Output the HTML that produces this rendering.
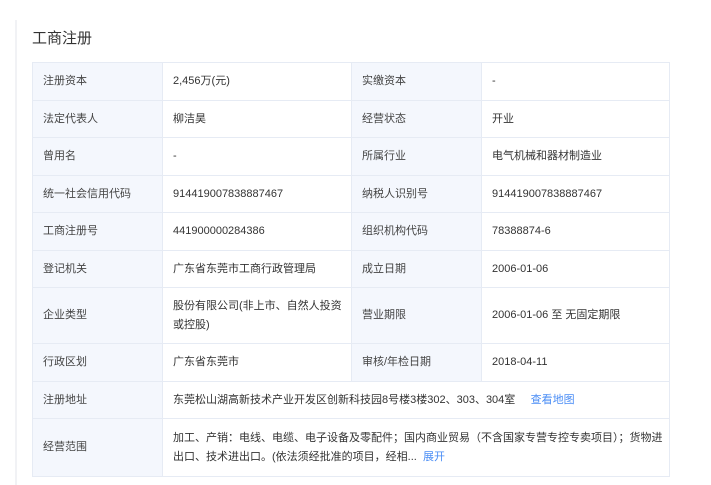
<!DOCTYPE html>
<html><head><meta charset="utf-8"><style>
body{margin:0;background:#fff;font-family:"Liberation Sans","Noto Sans CJK SC",sans-serif;width:711px;height:485px;overflow:hidden;position:relative}
.bar{position:absolute;left:15px;top:20px;width:2px;height:465px;background:#f1f2f5}
h2{position:absolute;left:32px;top:28px;margin:0;font-size:15px;font-weight:normal;color:#333;line-height:22px}
table{position:absolute;left:32px;top:62px;border-collapse:collapse;width:637px;table-layout:fixed;font-size:11px;color:#333}
td{border:1px solid #e6ebf4;padding:0 4px 0 10px;line-height:19px;vertical-align:middle}
td.l{background:#f4f7fd;color:#444}
a{color:#4a8df5;text-decoration:none}
</style></head><body>
<div class="bar"></div>
<h2>工商注册</h2>
<table>
<colgroup><col style="width:130px"><col style="width:189px"><col style="width:130px"><col style="width:188px"></colgroup>
<tr style="height:38px"><td class="l">注册资本</td><td>2,456万(元)</td><td class="l">实缴资本</td><td>-</td></tr>
<tr style="height:37px"><td class="l">法定代表人</td><td>柳洁昊</td><td class="l">经营状态</td><td>开业</td></tr>
<tr style="height:38px"><td class="l">曾用名</td><td>-</td><td class="l">所属行业</td><td>电气机械和器材制造业</td></tr>
<tr style="height:37px"><td class="l">统一社会信用代码</td><td>914419007838887467</td><td class="l">纳税人识别号</td><td>914419007838887467</td></tr>
<tr style="height:38px"><td class="l">工商注册号</td><td>441900000284386</td><td class="l">组织机构代码</td><td>78388874-6</td></tr>
<tr style="height:37px"><td class="l">登记机关</td><td>广东省东莞市工商行政管理局</td><td class="l">成立日期</td><td>2006-01-06</td></tr>
<tr style="height:56px"><td class="l">企业类型</td><td>股份有限公司(非上市、自然人投资或控股)</td><td class="l">营业期限</td><td>2006-01-06 至 无固定期限</td></tr>
<tr style="height:38px"><td class="l">行政区划</td><td>广东省东莞市</td><td class="l">审核/年检日期</td><td>2018-04-11</td></tr>
<tr style="height:37px"><td class="l">注册地址</td><td colspan="3">东莞松山湖高新技术产业开发区创新科技园8号楼3楼302、303、304室 &nbsp; &nbsp; <a>查看地图</a></td></tr>
<tr style="height:58px"><td class="l">经营范围</td><td colspan="3">加工、产销：电线、电缆、电子设备及零配件；国内商业贸易（不含国家专营专控专卖项目）；货物进出口、技术进出口。(依法须经批准的项目，经相... &nbsp;<a>展开</a></td></tr>
</table>
</body></html>
